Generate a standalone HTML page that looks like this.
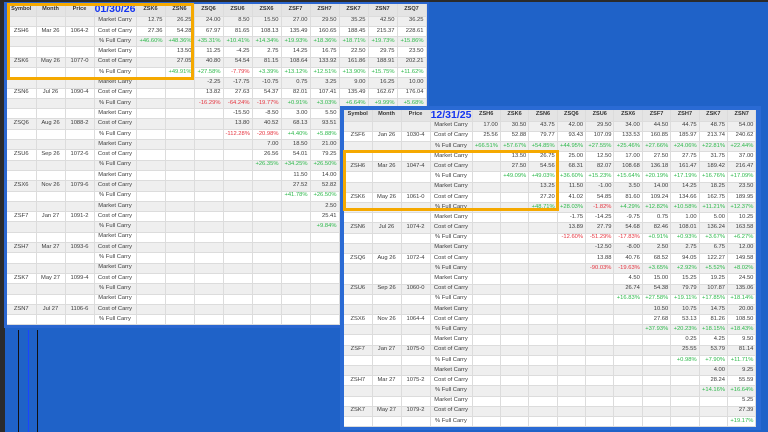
<!DOCTYPE html>
<html><head><meta charset="utf-8"><style>
html,body{margin:0;padding:0}
body{width:768px;height:432px;background:#1f62c8;position:relative;overflow:hidden;font-family:"Liberation Sans",sans-serif}
.topbar{position:absolute;left:0;top:0;width:768px;height:2px;background:#2a2a2a}
.lstrip{position:absolute;left:0;top:0;width:5px;height:432px;background:#2b2b2b}
.vl{position:absolute;top:330px;height:102px;width:1px}
table{position:absolute;border-collapse:collapse;table-layout:fixed;background:#fff}
td{font-size:5.8px;color:#3a3a3a;text-align:right;padding:0 2px;border-right:1px solid #dcdcdc;border-bottom:1px solid #dcdcdc;white-space:nowrap;overflow:hidden;line-height:1;vertical-align:middle}
td.c{text-align:center}
tr.h td{background:#e4e4e4;font-weight:bold;text-align:center;color:#333;font-size:5.6px}
tr.a td{background:#efefef}
td.g{color:#2cb84a}td.r{color:#e5323d}
tr.h td.d{color:#1434f0;font-size:10.5px;font-weight:bold;padding:0;line-height:9px}
#t1{left:7px;top:4px;width:419px}
#t1 tr{height:10.3px}#t1 tr.h{height:12px}
#t2{left:344px;top:110px;width:412px}
#t2 tr{height:10.2px}#t2 tr.h{height:11px}
.fr{position:absolute;border:3px solid #f5a900;box-sizing:border-box}
.bx{position:absolute;background:#2a66d0}
</style></head><body>
<div class="topbar"></div>
<div class="lstrip"></div>
<div class="bx" style="left:4px;top:2px;width:425px;height:326px"></div>
<table id="t1">
<colgroup><col style="width:29px"><col style="width:29px"><col style="width:29px"><col style="width:42px"><col span="10" style="width:29px"></colgroup>
<tr class="h"><td>Symbol</td><td>Month</td><td>Price</td><td class="d">01/30/26</td><td>ZSK6</td><td>ZSN6</td><td>ZSQ6</td><td>ZSU6</td><td>ZSX6</td><td>ZSF7</td><td>ZSH7</td><td>ZSK7</td><td>ZSN7</td><td>ZSQ7</td></tr>
<tr class="a"><td></td><td></td><td></td><td class="c">Market Carry</td><td>12.75</td><td>26.25</td><td>24.00</td><td>8.50</td><td>15.50</td><td>27.00</td><td>29.50</td><td>35.25</td><td>42.50</td><td>36.25</td></tr>
<tr><td class="c">ZSH6</td><td class="c">Mar 26</td><td class="c">1064-2</td><td class="c">Cost of Carry</td><td>27.36</td><td>54.28</td><td>67.97</td><td>81.65</td><td>108.13</td><td>135.49</td><td>160.65</td><td>188.45</td><td>215.37</td><td>228.61</td></tr>
<tr class="a"><td></td><td></td><td></td><td class="c">% Full Carry</td><td class="g">+46.60%</td><td class="g">+48.36%</td><td class="g">+35.31%</td><td class="g">+10.41%</td><td class="g">+14.34%</td><td class="g">+19.93%</td><td class="g">+18.36%</td><td class="g">+18.71%</td><td class="g">+19.73%</td><td class="g">+15.86%</td></tr>
<tr><td></td><td></td><td></td><td class="c">Market Carry</td><td></td><td>13.50</td><td>11.25</td><td>-4.25</td><td>2.75</td><td>14.25</td><td>16.75</td><td>22.50</td><td>29.75</td><td>23.50</td></tr>
<tr class="a"><td class="c">ZSK6</td><td class="c">May 26</td><td class="c">1077-0</td><td class="c">Cost of Carry</td><td></td><td>27.05</td><td>40.80</td><td>54.54</td><td>81.15</td><td>108.64</td><td>133.92</td><td>161.86</td><td>188.91</td><td>202.21</td></tr>
<tr><td></td><td></td><td></td><td class="c">% Full Carry</td><td></td><td class="g">+49.91%</td><td class="g">+27.58%</td><td class="r">-7.79%</td><td class="g">+3.39%</td><td class="g">+13.12%</td><td class="g">+12.51%</td><td class="g">+13.90%</td><td class="g">+15.75%</td><td class="g">+11.62%</td></tr>
<tr class="a"><td></td><td></td><td></td><td class="c">Market Carry</td><td></td><td></td><td>-2.25</td><td>-17.75</td><td>-10.75</td><td>0.75</td><td>3.25</td><td>9.00</td><td>16.25</td><td>10.00</td></tr>
<tr><td class="c">ZSN6</td><td class="c">Jul 26</td><td class="c">1090-4</td><td class="c">Cost of Carry</td><td></td><td></td><td>13.82</td><td>27.63</td><td>54.37</td><td>82.01</td><td>107.41</td><td>135.49</td><td>162.67</td><td>176.04</td></tr>
<tr class="a"><td></td><td></td><td></td><td class="c">% Full Carry</td><td></td><td></td><td class="r">-16.29%</td><td class="r">-64.24%</td><td class="r">-19.77%</td><td class="g">+0.91%</td><td class="g">+3.03%</td><td class="g">+6.64%</td><td class="g">+9.99%</td><td class="g">+5.68%</td></tr>
<tr><td></td><td></td><td></td><td class="c">Market Carry</td><td></td><td></td><td></td><td>-15.50</td><td>-8.50</td><td>3.00</td><td>5.50</td><td></td><td></td><td></td></tr>
<tr class="a"><td class="c">ZSQ6</td><td class="c">Aug 26</td><td class="c">1088-2</td><td class="c">Cost of Carry</td><td></td><td></td><td></td><td>13.80</td><td>40.52</td><td>68.13</td><td>93.51</td><td></td><td></td><td></td></tr>
<tr><td></td><td></td><td></td><td class="c">% Full Carry</td><td></td><td></td><td></td><td class="r">-112.28%</td><td class="r">-20.98%</td><td class="g">+4.40%</td><td class="g">+5.88%</td><td></td><td></td><td></td></tr>
<tr class="a"><td></td><td></td><td></td><td class="c">Market Carry</td><td></td><td></td><td></td><td></td><td>7.00</td><td>18.50</td><td>21.00</td><td></td><td></td><td></td></tr>
<tr><td class="c">ZSU6</td><td class="c">Sep 26</td><td class="c">1072-6</td><td class="c">Cost of Carry</td><td></td><td></td><td></td><td></td><td>26.56</td><td>54.01</td><td>79.25</td><td></td><td></td><td></td></tr>
<tr class="a"><td></td><td></td><td></td><td class="c">% Full Carry</td><td></td><td></td><td></td><td></td><td class="g">+26.35%</td><td class="g">+34.25%</td><td class="g">+26.50%</td><td></td><td></td><td></td></tr>
<tr><td></td><td></td><td></td><td class="c">Market Carry</td><td></td><td></td><td></td><td></td><td></td><td>11.50</td><td>14.00</td><td></td><td></td><td></td></tr>
<tr class="a"><td class="c">ZSX6</td><td class="c">Nov 26</td><td class="c">1079-6</td><td class="c">Cost of Carry</td><td></td><td></td><td></td><td></td><td></td><td>27.52</td><td>52.82</td><td></td><td></td><td></td></tr>
<tr><td></td><td></td><td></td><td class="c">% Full Carry</td><td></td><td></td><td></td><td></td><td></td><td class="g">+41.78%</td><td class="g">+26.50%</td><td></td><td></td><td></td></tr>
<tr class="a"><td></td><td></td><td></td><td class="c">Market Carry</td><td></td><td></td><td></td><td></td><td></td><td></td><td>2.50</td><td></td><td></td><td></td></tr>
<tr><td class="c">ZSF7</td><td class="c">Jan 27</td><td class="c">1091-2</td><td class="c">Cost of Carry</td><td></td><td></td><td></td><td></td><td></td><td></td><td>25.41</td><td></td><td></td><td></td></tr>
<tr class="a"><td></td><td></td><td></td><td class="c">% Full Carry</td><td></td><td></td><td></td><td></td><td></td><td></td><td class="g">+9.84%</td><td></td><td></td><td></td></tr>
<tr><td></td><td></td><td></td><td class="c">Market Carry</td><td></td><td></td><td></td><td></td><td></td><td></td><td></td><td></td><td></td><td></td></tr>
<tr class="a"><td class="c">ZSH7</td><td class="c">Mar 27</td><td class="c">1093-6</td><td class="c">Cost of Carry</td><td></td><td></td><td></td><td></td><td></td><td></td><td></td><td></td><td></td><td></td></tr>
<tr><td></td><td></td><td></td><td class="c">% Full Carry</td><td></td><td></td><td></td><td></td><td></td><td></td><td></td><td></td><td></td><td></td></tr>
<tr class="a"><td></td><td></td><td></td><td class="c">Market Carry</td><td></td><td></td><td></td><td></td><td></td><td></td><td></td><td></td><td></td><td></td></tr>
<tr><td class="c">ZSK7</td><td class="c">May 27</td><td class="c">1099-4</td><td class="c">Cost of Carry</td><td></td><td></td><td></td><td></td><td></td><td></td><td></td><td></td><td></td><td></td></tr>
<tr class="a"><td></td><td></td><td></td><td class="c">% Full Carry</td><td></td><td></td><td></td><td></td><td></td><td></td><td></td><td></td><td></td><td></td></tr>
<tr><td></td><td></td><td></td><td class="c">Market Carry</td><td></td><td></td><td></td><td></td><td></td><td></td><td></td><td></td><td></td><td></td></tr>
<tr class="a"><td class="c">ZSN7</td><td class="c">Jul 27</td><td class="c">1106-6</td><td class="c">Cost of Carry</td><td></td><td></td><td></td><td></td><td></td><td></td><td></td><td></td><td></td><td></td></tr>
<tr><td></td><td></td><td></td><td class="c">% Full Carry</td><td></td><td></td><td></td><td></td><td></td><td></td><td></td><td></td><td></td><td></td></tr>
</table>
<div class="fr" style="left:7px;top:3px;width:187px;height:77px"></div>
<div class="vl" style="left:18px;background:#111"></div>
<div class="vl" style="left:28px;background:#1a44ff"></div>
<div class="vl" style="left:37px;background:#111"></div>

<div class="bx" style="left:340px;top:106px;width:421px;height:324px;background:#2a6ad4"></div>
<table id="t2">
<colgroup><col style="width:28px"><col style="width:29px"><col style="width:29px"><col style="width:42px"><col span="10" style="width:28.4px"></colgroup>
<tr class="h"><td>Symbol</td><td>Month</td><td>Price</td><td class="d">12/31/25</td><td>ZSH6</td><td>ZSK6</td><td>ZSN6</td><td>ZSQ6</td><td>ZSU6</td><td>ZSX6</td><td>ZSF7</td><td>ZSH7</td><td>ZSK7</td><td>ZSN7</td></tr>
<tr class="a"><td></td><td></td><td></td><td class="c">Market Carry</td><td>17.00</td><td>30.50</td><td>43.75</td><td>42.00</td><td>29.50</td><td>34.00</td><td>44.50</td><td>44.75</td><td>48.75</td><td>54.00</td></tr>
<tr><td class="c">ZSF6</td><td class="c">Jan 26</td><td class="c">1030-4</td><td class="c">Cost of Carry</td><td>25.56</td><td>52.88</td><td>79.77</td><td>93.43</td><td>107.09</td><td>133.53</td><td>160.85</td><td>185.97</td><td>213.74</td><td>240.62</td></tr>
<tr class="a"><td></td><td></td><td></td><td class="c">% Full Carry</td><td class="g">+66.51%</td><td class="g">+57.67%</td><td class="g">+54.85%</td><td class="g">+44.95%</td><td class="g">+27.55%</td><td class="g">+25.46%</td><td class="g">+27.66%</td><td class="g">+24.06%</td><td class="g">+22.81%</td><td class="g">+22.44%</td></tr>
<tr><td></td><td></td><td></td><td class="c">Market Carry</td><td></td><td>13.50</td><td>26.75</td><td>25.00</td><td>12.50</td><td>17.00</td><td>27.50</td><td>27.75</td><td>31.75</td><td>37.00</td></tr>
<tr class="a"><td class="c">ZSH6</td><td class="c">Mar 26</td><td class="c">1047-4</td><td class="c">Cost of Carry</td><td></td><td>27.50</td><td>54.56</td><td>68.31</td><td>82.07</td><td>108.68</td><td>136.18</td><td>161.47</td><td>189.42</td><td>216.47</td></tr>
<tr><td></td><td></td><td></td><td class="c">% Full Carry</td><td></td><td class="g">+49.09%</td><td class="g">+49.03%</td><td class="g">+36.60%</td><td class="g">+15.23%</td><td class="g">+15.64%</td><td class="g">+20.19%</td><td class="g">+17.19%</td><td class="g">+16.76%</td><td class="g">+17.09%</td></tr>
<tr class="a"><td></td><td></td><td></td><td class="c">Market Carry</td><td></td><td></td><td>13.25</td><td>11.50</td><td>-1.00</td><td>3.50</td><td>14.00</td><td>14.25</td><td>18.25</td><td>23.50</td></tr>
<tr><td class="c">ZSK6</td><td class="c">May 26</td><td class="c">1061-0</td><td class="c">Cost of Carry</td><td></td><td></td><td>27.20</td><td>41.02</td><td>54.85</td><td>81.60</td><td>109.24</td><td>134.66</td><td>162.75</td><td>189.95</td></tr>
<tr class="a"><td></td><td></td><td></td><td class="c">% Full Carry</td><td></td><td></td><td class="g">+48.71%</td><td class="g">+28.03%</td><td class="r">-1.82%</td><td class="g">+4.29%</td><td class="g">+12.82%</td><td class="g">+10.58%</td><td class="g">+11.21%</td><td class="g">+12.37%</td></tr>
<tr><td></td><td></td><td></td><td class="c">Market Carry</td><td></td><td></td><td></td><td>-1.75</td><td>-14.25</td><td>-9.75</td><td>0.75</td><td>1.00</td><td>5.00</td><td>10.25</td></tr>
<tr class="a"><td class="c">ZSN6</td><td class="c">Jul 26</td><td class="c">1074-2</td><td class="c">Cost of Carry</td><td></td><td></td><td></td><td>13.89</td><td>27.79</td><td>54.68</td><td>82.46</td><td>108.01</td><td>136.24</td><td>163.58</td></tr>
<tr><td></td><td></td><td></td><td class="c">% Full Carry</td><td></td><td></td><td></td><td class="r">-12.60%</td><td class="r">-51.29%</td><td class="r">-17.83%</td><td class="g">+0.91%</td><td class="g">+0.93%</td><td class="g">+3.67%</td><td class="g">+6.27%</td></tr>
<tr class="a"><td></td><td></td><td></td><td class="c">Market Carry</td><td></td><td></td><td></td><td></td><td>-12.50</td><td>-8.00</td><td>2.50</td><td>2.75</td><td>6.75</td><td>12.00</td></tr>
<tr><td class="c">ZSQ6</td><td class="c">Aug 26</td><td class="c">1072-4</td><td class="c">Cost of Carry</td><td></td><td></td><td></td><td></td><td>13.88</td><td>40.76</td><td>68.52</td><td>94.05</td><td>122.27</td><td>149.58</td></tr>
<tr class="a"><td></td><td></td><td></td><td class="c">% Full Carry</td><td></td><td></td><td></td><td></td><td class="r">-90.03%</td><td class="r">-19.63%</td><td class="g">+3.65%</td><td class="g">+2.92%</td><td class="g">+5.52%</td><td class="g">+8.02%</td></tr>
<tr><td></td><td></td><td></td><td class="c">Market Carry</td><td></td><td></td><td></td><td></td><td></td><td>4.50</td><td>15.00</td><td>15.25</td><td>19.25</td><td>24.50</td></tr>
<tr class="a"><td class="c">ZSU6</td><td class="c">Sep 26</td><td class="c">1060-0</td><td class="c">Cost of Carry</td><td></td><td></td><td></td><td></td><td></td><td>26.74</td><td>54.38</td><td>79.79</td><td>107.87</td><td>135.06</td></tr>
<tr><td></td><td></td><td></td><td class="c">% Full Carry</td><td></td><td></td><td></td><td></td><td></td><td class="g">+16.83%</td><td class="g">+27.58%</td><td class="g">+19.11%</td><td class="g">+17.85%</td><td class="g">+18.14%</td></tr>
<tr class="a"><td></td><td></td><td></td><td class="c">Market Carry</td><td></td><td></td><td></td><td></td><td></td><td></td><td>10.50</td><td>10.75</td><td>14.75</td><td>20.00</td></tr>
<tr><td class="c">ZSX6</td><td class="c">Nov 26</td><td class="c">1064-4</td><td class="c">Cost of Carry</td><td></td><td></td><td></td><td></td><td></td><td></td><td>27.68</td><td>53.13</td><td>81.26</td><td>108.50</td></tr>
<tr class="a"><td></td><td></td><td></td><td class="c">% Full Carry</td><td></td><td></td><td></td><td></td><td></td><td></td><td class="g">+37.93%</td><td class="g">+20.23%</td><td class="g">+18.15%</td><td class="g">+18.43%</td></tr>
<tr><td></td><td></td><td></td><td class="c">Market Carry</td><td></td><td></td><td></td><td></td><td></td><td></td><td></td><td>0.25</td><td>4.25</td><td>9.50</td></tr>
<tr class="a"><td class="c">ZSF7</td><td class="c">Jan 27</td><td class="c">1075-0</td><td class="c">Cost of Carry</td><td></td><td></td><td></td><td></td><td></td><td></td><td></td><td>25.55</td><td>53.79</td><td>81.14</td></tr>
<tr><td></td><td></td><td></td><td class="c">% Full Carry</td><td></td><td></td><td></td><td></td><td></td><td></td><td></td><td class="g">+0.98%</td><td class="g">+7.90%</td><td class="g">+11.71%</td></tr>
<tr class="a"><td></td><td></td><td></td><td class="c">Market Carry</td><td></td><td></td><td></td><td></td><td></td><td></td><td></td><td></td><td>4.00</td><td>9.25</td></tr>
<tr><td class="c">ZSH7</td><td class="c">Mar 27</td><td class="c">1075-2</td><td class="c">Cost of Carry</td><td></td><td></td><td></td><td></td><td></td><td></td><td></td><td></td><td>28.24</td><td>55.59</td></tr>
<tr class="a"><td></td><td></td><td></td><td class="c">% Full Carry</td><td></td><td></td><td></td><td></td><td></td><td></td><td></td><td></td><td class="g">+14.16%</td><td class="g">+16.64%</td></tr>
<tr><td></td><td></td><td></td><td class="c">Market Carry</td><td></td><td></td><td></td><td></td><td></td><td></td><td></td><td></td><td></td><td>5.25</td></tr>
<tr class="a"><td class="c">ZSK7</td><td class="c">May 27</td><td class="c">1079-2</td><td class="c">Cost of Carry</td><td></td><td></td><td></td><td></td><td></td><td></td><td></td><td></td><td></td><td>27.39</td></tr>
<tr><td></td><td></td><td></td><td class="c">% Full Carry</td><td></td><td></td><td></td><td></td><td></td><td></td><td></td><td></td><td></td><td class="g">+19.17%</td></tr>
</table>
<div class="fr" style="left:343px;top:150px;width:216px;height:61px"></div>
</body></html>
